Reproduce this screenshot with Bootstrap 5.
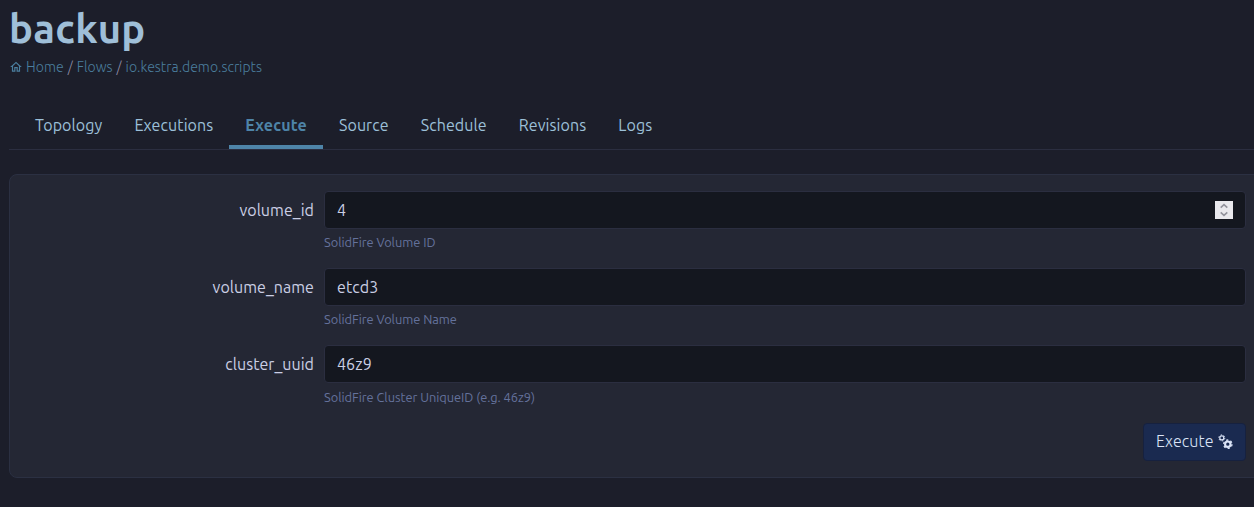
<!DOCTYPE html>
<html lang="en" data-bs-theme="dark">
<head>
<meta charset="utf-8">
<meta name="viewport" content="width=device-width, initial-scale=1">
<title>backup</title>
<link href="https://cdn.jsdelivr.net/npm/bootstrap@5.3.0/dist/css/bootstrap.min.css" rel="stylesheet">
<style>
body{background:#1c1e2a;font-family:Ubuntu,"Noto Sans",sans-serif;font-size:16px;line-height:24px;color:#cbcfe5;overflow:hidden}
.page{padding-left:9px;width:1263px}
h1{font-size:40px;font-weight:700;line-height:48px;color:#9fbfd8;margin:5px 0 0;letter-spacing:.3px}
.crumbs{--bs-breadcrumb-item-padding-x:4px;--bs-breadcrumb-divider-color:#8f8ca5;--bs-breadcrumb-margin-bottom:0;font-size:14px;line-height:21px;margin-top:4px;font-weight:300;letter-spacing:.04px}
.crumbs a{color:#4b7f9f;text-decoration:none}
.crumbs svg{margin:-2px 3px 0 0}
.tabs{margin-top:23px;height:48px;border-bottom:1px solid #2b2e40;padding-left:10px;box-sizing:content-box;letter-spacing:.09px}
.tabs .nav-link{padding:12px 16px 8px;color:#9cc0d9;border-bottom:4px solid transparent;height:48px;white-space:nowrap}
.tabs .nav-link.active{color:#4e84a8;font-weight:700;border-color:#4e84a8;letter-spacing:.17px}
.panel{margin-top:24px;height:304px;background:#242734;border:1px solid #2b3042;border-radius:8px;padding:16px 16px 16px 10px}
.field{height:77.2px;gap:10px}
.field label{width:294px;line-height:38px;text-align:right;letter-spacing:.04px}
.field .form-control{height:38px;background:#14171f;border:1px solid #2b2e40;border-radius:4px;font-size:16px;color:#cbcfe5;padding:6px 12px;line-height:24px;letter-spacing:.1px}
.hint{font-size:12.8px;line-height:19.2px;color:#64729c;margin-top:4px;letter-spacing:-.03px}
.field:nth-of-type(3) .hint{margin-top:5px}
.stepper{position:absolute;right:13px;top:10px;width:18px;height:18px;background:#e9e9ed}
.run{width:103px;height:38px;background:#1a2a50;border:1px solid #16213f;border-radius:4px;color:#dbe4f7;padding:0 12px 2px;font-size:16px;font-weight:300;white-space:nowrap;letter-spacing:.1px}
.run svg{margin:2px 0 0 3px;flex:none}
</style>
</head>
<body>
<div class="page">
<h1>backup</h1>
<ol class="breadcrumb crumbs">
<li class="breadcrumb-item"><a href="#" class="d-flex align-items-center"><svg width="14" height="14" viewBox="0 0 24 24" fill="currentColor"><path d="M12 5.7 17 10.2V18h-2v-6H9v6H7v-7.8zM12 3 2 12h3v8h6v-6h2v6h6v-8h3z"/></svg>Home</a></li>
<li class="breadcrumb-item"><a href="#">Flows</a></li>
<li class="breadcrumb-item"><a href="#">io.kestra.demo.scripts</a></li>
</ol>
<nav class="nav flex-nowrap tabs">
<a class="nav-link" href="#">Topology</a>
<a class="nav-link" href="#">Executions</a>
<a class="nav-link active" href="#">Execute</a>
<a class="nav-link" href="#">Source</a>
<a class="nav-link" href="#">Schedule</a>
<a class="nav-link" href="#">Revisions</a>
<a class="nav-link" href="#">Logs</a>
</nav>
<form class="panel">
<div class="field d-flex"><label for="volume_id">volume_id</label><div class="flex-grow-1"><div class="position-relative"><input id="volume_id" class="form-control" value="4"><svg class="stepper" viewBox="0 0 18 18" fill="none" stroke="#92939c" stroke-width="1.6"><path d="m5.7 6.7 3.3-3 3.3 3M5.7 11.3l3.3 3 3.3-3"/></svg></div><div class="hint">SolidFire Volume ID</div></div></div>
<div class="field d-flex"><label for="volume_name">volume_name</label><div class="flex-grow-1"><input id="volume_name" class="form-control" value="etcd3"><div class="hint">SolidFire Volume Name</div></div></div>
<div class="field d-flex"><label for="cluster_uuid">cluster_uuid</label><div class="flex-grow-1"><input id="cluster_uuid" class="form-control" value="46z9"><div class="hint">SolidFire Cluster UniqueID (e.g. 46z9)</div></div></div>
<div class="d-flex justify-content-end"><button type="button" class="btn run d-flex align-items-center">Execute<svg width="16" height="16" viewBox="0 0 16 16" fill="none" stroke="currentColor"><circle cx="4.8" cy="3.9" r="2" stroke-width="1.2"/><circle cx="4.8" cy="3.9" r="3" stroke-width="1" stroke-dasharray="1.5 1.64"/><circle cx="10.8" cy="10.2" r="2.7" stroke-width="2.1"/><circle cx="10.8" cy="10.2" r="4.2" stroke-width="1.3" stroke-dasharray="2.2 2.2"/></svg></button></div>
</form>
</div>
<script src="https://cdn.jsdelivr.net/npm/bootstrap@5.3.0/dist/js/bootstrap.bundle.min.js"></script>
</body>
</html>
